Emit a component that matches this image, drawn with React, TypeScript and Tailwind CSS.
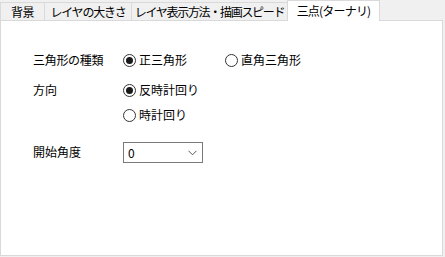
import React from "react";

function Radio({ checked, label }: { checked?: boolean; label: string }) {
  return (
    <div className="flex items-center h-[20px]">
      <span className="w-[13px] h-[13px] rounded-full border border-[#333333] bg-white flex items-center justify-center box-border">
        {checked && <span className="w-[7px] h-[7px] rounded-full bg-[#1a1a1a]" />}
      </span>
      <span className="ml-[3px] leading-none">{label}</span>
    </div>
  );
}

export default function App() {
  return (
    <div className="w-[445px] h-[257px] bg-[#f0f0f0] text-[12px] text-black font-['Noto_Sans_CJK_JP','Noto_Sans',sans-serif] overflow-hidden">
      <div className="flex items-end h-[21px] relative z-10">
        <div className="w-[44px] h-[19px] border-t border-l border-[#d9d9d9] flex items-center justify-center tracking-[-0.5px]">
          背景
        </div>
        <div className="w-[87px] h-[19px] border-t border-l border-[#d9d9d9] flex items-center justify-center tracking-[-1.2px]">
          レイヤの大きさ
        </div>
        <div className="w-[156px] h-[19px] border-t border-l border-[#d9d9d9] flex items-center justify-center tracking-[-1.3px]">
          レイヤ表示方法・描画スピード
        </div>
        <div className="w-[93px] h-[21px] border-t border-l border-r border-[#d9d9d9] bg-white flex items-center justify-center tracking-[-0.8px] pb-[1px]">
          三点(ターナリ)
        </div>
      </div>
      <div className="-mt-[1px] w-[443px] h-[236px] bg-white border border-[#d9d9d9] box-border pl-[32px] pt-[29px]">
        <div className="flex items-center h-[20px]">
          <div className="w-[90px] tracking-[-0.3px]">三角形の種類</div>
          <div className="w-[102px]">
            <Radio checked label="正三角形" />
          </div>
          <Radio label="直角三角形" />
        </div>
        <div className="flex items-center h-[20px] mt-[10px]">
          <div className="w-[90px]">方向</div>
          <Radio checked label="反時計回り" />
        </div>
        <div className="flex items-center h-[20px] mt-[5px]">
          <div className="w-[90px]" />
          <Radio label="時計回り" />
        </div>
        <div className="flex items-center mt-[17px]">
          <div className="w-[90px] -mt-[2px]">開始角度</div>
          <div className="w-[80px] h-[21px] border border-[#7a7a7a] box-border flex items-center justify-between pl-[4px] pr-[5px] bg-white">
            <span className="leading-none">0</span>
            <svg width="9" height="6" viewBox="0 0 9 6">
              <path d="M0.5 0.8 L4.5 4.8 L8.5 0.8" fill="none" stroke="#555" strokeWidth="1" />
            </svg>
          </div>
        </div>
      </div>
    </div>
  );
}
